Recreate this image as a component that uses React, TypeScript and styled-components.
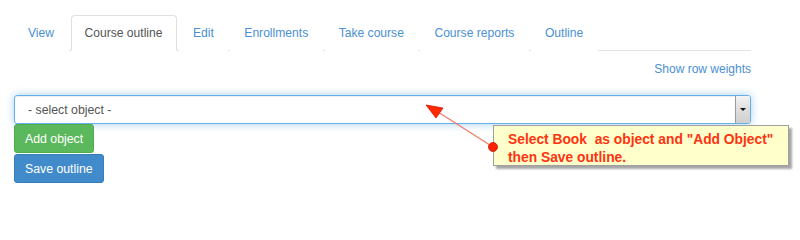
import React from "react";
import styled, { createGlobalStyle } from "styled-components";

const Global = createGlobalStyle`
  html, body { margin: 0; padding: 0; background: #fff; }
  body { font-family: "Liberation Sans", Arial, sans-serif; font-size: 12.3px; color: #333; }
  * { box-sizing: border-box; }
`;

const Page = styled.div`
  position: relative;
  width: 800px;
  height: 236px;
  padding: 15px 0 0 14px;
`;

const Content = styled.div`
  width: 737px;
  display: flex;
  flex-direction: column;
`;

const Tabs = styled.ul`
  display: flex;
  margin: 0;
  padding: 0;
  list-style: none;
  border-bottom: 1px solid #e3e3e3;
`;

const Tab = styled.li<{ $active?: boolean }>`
  margin: 0 2px -1px 0;
  padding: 8.5px 13.5px 8.5px 13px;
  font-size: 12.1px;
  line-height: 17px;
  border: 1px solid ${(p) => (p.$active ? "#e0e0e0" : "transparent")};
  border-bottom-color: ${(p) => (p.$active ? "#fff" : "transparent")};
  border-radius: 4px 4px 0 0;
  background: #fff;
  color: ${(p) => (p.$active ? "#555" : "#4a90d2")};
  white-space: nowrap;
`;

const Actions = styled.div`
  display: flex;
  justify-content: flex-end;
  margin-top: 10px;
  font-size: 12px;
  line-height: 17px;
  color: #4a90d2;
`;

const Select = styled.div`
  display: flex;
  align-items: stretch;
  margin-top: 17px;
  height: 29px;
  border: 1px solid #66afe9;
  border-radius: 3px;
  box-shadow: inset 0 1px 1px rgba(0, 0, 0, 0.075), 0 0 8px rgba(102, 175, 233, 0.6);
  background: #fff;
`;

const SelectText = styled.div`
  flex: 1;
  display: flex;
  align-items: center;
  padding-left: 13px;
  color: #555;
`;

const DropButton = styled.div`
  width: 15px;
  display: flex;
  align-items: center;
  justify-content: center;
  border-left: 1px solid #9a9a9a;
  border-radius: 0 2px 2px 0;
  background: linear-gradient(#f4f4f4, #dedede 50%, #cfcfcf);
`;

const Caret = styled.div`
  width: 0;
  height: 0;
  border-left: 3px solid transparent;
  border-right: 3px solid transparent;
  border-top: 3px solid #111;
`;

const Buttons = styled.div`
  display: flex;
  flex-direction: column;
  align-items: flex-start;
  gap: 1px;
`;

const Button = styled.button<{ $variant: "success" | "primary" }>`
  height: 29px;
  padding: 0 10px;
  font: inherit;
  font-size: 12.3px;
  color: #fff;
  border-radius: 3px;
  border: 1px solid ${(p) => (p.$variant === "success" ? "#4cae4c" : "#357ebd")};
  background: ${(p) => (p.$variant === "success" ? "#5cb85c" : "#428bca")};
`;

const Callout = styled.div`
  position: absolute;
  left: 493px;
  top: 125px;
  width: 296px;
  height: 41px;
  padding: 4.5px 0 0 14px;
  background: #ffffcc;
  border: 1px solid #a0a0a0;
  box-shadow: 3px 3px 2px rgba(0, 0, 0, 0.35);
  color: #ff3311;
  font-weight: bold;
  font-size: 13.8px;
  line-height: 18px;
  white-space: pre;
`;

const Overlay = styled.svg`
  position: absolute;
  left: 0;
  top: 0;
  pointer-events: none;
`;

const tabs = ["View", "Course outline", "Edit", "Enrollments", "Take course", "Course reports", "Outline"];

export default function App() {
  return (
    <>
      <Global />
      <Page>
        <Content>
          <Tabs>
            {tabs.map((t) => (
              <Tab key={t} $active={t === "Course outline"}>
                {t}
              </Tab>
            ))}
          </Tabs>
          <Actions>Show row weights</Actions>
          <Select>
            <SelectText>- select object -</SelectText>
            <DropButton>
              <Caret />
            </DropButton>
          </Select>
          <Buttons>
            <Button $variant="success">Add object</Button>
            <Button $variant="primary">Save outline</Button>
          </Buttons>
        </Content>
        <Overlay width="800" height="236" viewBox="0 0 800 236">
          <line x1="493" y1="147" x2="438" y2="112" stroke="#f07a68" strokeWidth="1.2" />
          <polygon points="426,105 436,118 443,108" fill="#ff2a00" stroke="#d01800" strokeWidth="0.8" />
        </Overlay>
        <Callout>{"Select Book  as object and \"Add Object\"\nthen Save outline."}</Callout>
        <Overlay width="800" height="236" viewBox="0 0 800 236">
          <circle cx="493" cy="147" r="4.5" fill="#ff2200" stroke="#c01500" strokeWidth="0.8" />
        </Overlay>
      </Page>
    </>
  );
}
